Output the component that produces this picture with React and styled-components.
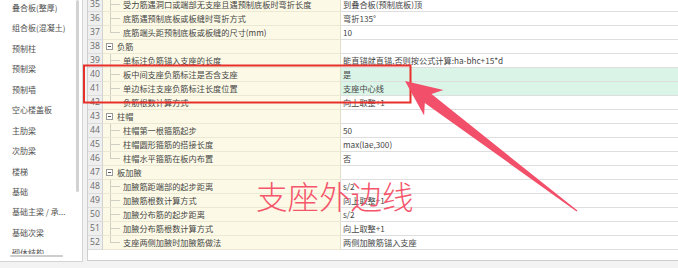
import React from 'react';
import styled, { createGlobalStyle } from 'styled-components';

const Global = createGlobalStyle`
  html, body { margin: 0; padding: 0; }
  body {
    background: #f3f3f3;
    font-family: "Noto Sans CJK SC", "Noto Sans", sans-serif;
  }
`;

const Screen = styled.div`
  position: relative;
  width: 678px;
  height: 268px;
  overflow: hidden;
  display: flex;
  align-items: flex-start;
  gap: 4px;
  background: #f3f3f3;
`;

const Sidebar = styled.aside`
  position: relative;
  flex: none;
  width: 83px;
  height: 262px;
  box-sizing: border-box;
  background: #fff;
  border-right: 1px solid #d4d4d4;
  border-bottom: 1px solid #d4d4d4;
  display: flex;
  flex-direction: column;
`;

const NavList = styled.ul`
  list-style: none;
  margin: -2px 0 0;
  padding: 0;
  height: 256px;
  overflow: hidden;
`;

const NavItem = styled.li`
  height: 20.45px;
  line-height: 20.45px;
  padding-left: 12px;
  font-size: 8px;
  color: #505050;
  white-space: nowrap;
`;

const VThumb = styled.div`
  position: absolute;
  right: 3px;
  top: 0;
  width: 3px;
  height: 192px;
  border-radius: 2px;
  background: #d2d2d2;
`;

const HThumb = styled.div`
  position: absolute;
  left: 10px;
  bottom: 4px;
  width: 53px;
  height: 2px;
  border-radius: 1px;
  background: #cdcdcd;
`;

const TablePanel = styled.section`
  flex: 1;
  height: 261px;
  box-sizing: border-box;
  background: #fff;
  border-left: 1px solid #cfcfcf;
  border-bottom: 1px solid #cfcfcf;
  overflow: hidden;
`;

const Rows = styled.div`
  margin-top: -2px;
  display: flex;
  flex-direction: column;
`;

const Row = styled.div`
  display: grid;
  grid-template-columns: 15px 238px 1fr;
  height: 14px;
`;

const NumCell = styled.div`
  box-sizing: border-box;
  background: #efefef;
  border-right: 1px solid #d2d2d2;
  border-bottom: 1px solid #dcdcdc;
  font-size: 8.6px;
  color: #6a6a6a;
  line-height: 13px;
  text-align: center;
  font-family: "Open Sans", "Noto Sans", sans-serif;
`;

const NameCell = styled.div`
  box-sizing: border-box;
  background: #fcfae6;
  border-right: 1px solid #e2dfc8;
  border-bottom: 1px solid #ebe8d4;
  display: flex;
  align-items: stretch;
  font-size: 8.2px;
  color: #474747;
  white-space: nowrap;
  overflow: hidden;
`;

const Label = styled.span`
  line-height: 13px;
  margin-left: ${p => p.$gap}px;
`;

const Guide = styled.span`
  flex: none;
  width: 10px;
  margin-left: 7px;
  background:
    linear-gradient(#cfcfc4, #cfcfc4) left top / 1px ${p => (p.$last ? '50%' : '100%')} no-repeat,
    linear-gradient(#cfcfc4, #cfcfc4) left 6px / 100% 1px no-repeat;
`;

const Toggle = styled.span`
  flex: none;
  align-self: center;
  margin-left: 3px;
  width: 7px;
  height: 7px;
  box-sizing: border-box;
  border: 1px solid #9a9a9a;
  background: #fff linear-gradient(#555, #555) center / 3px 1px no-repeat;
`;

const ValueCell = styled.div`
  box-sizing: border-box;
  background: ${p => (p.$hl ? '#dbf4e8' : '#fff')};
  border-bottom: 1px solid #dedede;
  padding-left: 2px;
  font-size: 8.2px;
  line-height: 13px;
  color: #474747;
  white-space: nowrap;
  overflow: hidden;
`;

const Overlay = styled.svg`
  position: absolute;
  left: 0;
  top: 0;
  width: 678px;
  height: 268px;
  pointer-events: none;
`;

const Caption = styled.span`
  position: absolute;
  left: 256px;
  top: 180px;
  font-size: 31.5px;
  line-height: 1;
  font-weight: 300;
  color: #f5566c;
  white-space: nowrap;
`;

const navItems = [
  '叠合板(整厚)', '组合板(混凝土)', '预制柱', '预制梁', '预制墙', '空心楼盖板',
  '主肋梁', '次肋梁', '楼梯', '基础', '基础主梁 / 承...', '基础次梁', '砌体结构',
];

const rows = [
  { n: 35, name: '受力筋遇洞口或端部无支座且遇预制底板时弯折长度', value: '到叠合板(预制底板)顶' },
  { n: 36, name: '底筋遇预制底板或板缝时弯折方式', value: '弯折135°' },
  { n: 37, name: '底筋端头距预制底板或板缝的尺寸(mm)', value: '10', last: true },
  { n: 38, name: '负筋', group: true },
  { n: 39, name: '单标注负筋锚入支座的长度', value: '能直锚就直锚,否则按公式计算:ha-bhc+15*d' },
  { n: 40, name: '板中间支座负筋标注是否含支座', value: '是', hl: true },
  { n: 41, name: '单边标注支座负筋标注长度位置', value: '支座中心线', hl: true },
  { n: 42, name: '负筋根数计算方式', value: '向上取整+1', last: true },
  { n: 43, name: '柱帽', group: true },
  { n: 44, name: '柱帽第一根箍筋起步', value: '50' },
  { n: 45, name: '柱帽圆形箍筋的搭接长度', value: 'max(lae,300)' },
  { n: 46, name: '柱帽水平箍筋在板内布置', value: '否', last: true },
  { n: 47, name: '板加腋', group: true },
  { n: 48, name: '加腋筋距端部的起步距离', value: 's/2' },
  { n: 49, name: '加腋筋根数计算方式', value: '向上取整+1' },
  { n: 50, name: '加腋分布筋的起步距离', value: 's/2' },
  { n: 51, name: '加腋分布筋根数计算方式', value: '向上取整+1' },
  { n: 52, name: '支座两侧加腋时加腋筋做法', value: '两侧加腋筋锚入支座', last: true },
];

function arrowPoints() {
  const tip = [405, 81];
  const tail = [577, 211];
  const dx = tail[0] - tip[0];
  const dy = tail[1] - tip[1];
  const len = Math.hypot(dx, dy);
  const u = [dx / len, dy / len];
  const nrm = [-u[1], u[0]];
  const at = (d, w) => [tip[0] + u[0] * d + nrm[0] * w, tip[1] + u[1] * d + nrm[1] * w];
  const pts = [
    tip,
    at(36, 16),
    at(29, 5.5),
    [tail[0] + nrm[0] * 0.6, tail[1] + nrm[1] * 0.6],
    [tail[0] - nrm[0] * 0.6, tail[1] - nrm[1] * 0.6],
    at(29, -5.5),
    at(36, -16),
  ];
  return pts.map(p => p.map(v => v.toFixed(1)).join(',')).join(' ');
}

export default function App() {
  return (
    <>
      <Global />
      <Screen>
        <Sidebar>
          <NavList>
            {navItems.map(t => (
              <NavItem key={t}>{t}</NavItem>
            ))}
          </NavList>
          <VThumb />
          <HThumb />
        </Sidebar>
        <TablePanel>
          <Rows>
            {rows.map(r => (
              <Row key={r.n}>
                <NumCell>{r.n}</NumCell>
                <NameCell>
                  {r.group ? (
                    <>
                      <Toggle />
                      <Label $gap={4}>{r.name}</Label>
                    </>
                  ) : (
                    <>
                      <Guide $last={r.last} />
                      <Label $gap={3}>{r.name}</Label>
                    </>
                  )}
                </NameCell>
                <ValueCell $hl={r.hl}>{r.value || ''}</ValueCell>
              </Row>
            ))}
          </Rows>
        </TablePanel>
        <Overlay viewBox="0 0 678 268">
          <rect x="84" y="65.5" width="326.5" height="37" fill="none" stroke="#e8302a" strokeWidth="2" />
          <polygon points={arrowPoints()} fill="#f2506a" />
        </Overlay>
        <Caption>支座外边线</Caption>
      </Screen>
    </>
  );
}
